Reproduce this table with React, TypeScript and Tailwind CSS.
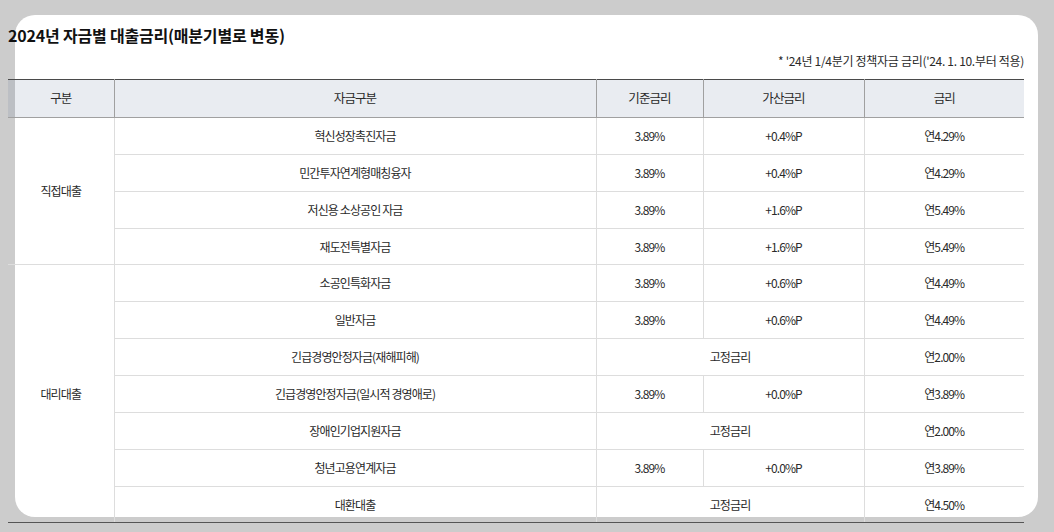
import React from 'react';

type Row = {
  name: string;
  base?: string;
  add?: string;
  rate: string;
  fixed?: boolean;
  short?: boolean;
};

const direct: Row[] = [
  { name: '혁신성장촉진자금', base: '3.89%', add: '+0.4%P', rate: '연4.29%' },
  { name: '민간투자연계형매칭융자', base: '3.89%', add: '+0.4%P', rate: '연4.29%' },
  { name: '저신용 소상공인 자금', base: '3.89%', add: '+1.6%P', rate: '연5.49%' },
  { name: '재도전특별자금', base: '3.89%', add: '+1.6%P', rate: '연5.49%', short: true },
];

const agency: Row[] = [
  { name: '소공인특화자금', base: '3.89%', add: '+0.6%P', rate: '연4.49%' },
  { name: '일반자금', base: '3.89%', add: '+0.6%P', rate: '연4.49%' },
  { name: '긴급경영안정자금(재해피해)', fixed: true, rate: '연2.00%' },
  { name: '긴급경영안정자금(일시적 경영애로)', base: '3.89%', add: '+0.0%P', rate: '연3.89%' },
  { name: '장애인기업지원자금', fixed: true, rate: '연2.00%' },
  { name: '청년고용연계자금', base: '3.89%', add: '+0.0%P', rate: '연3.89%' },
  { name: '대환대출', fixed: true, rate: '연4.50%', short: true },
];

function Rows({ label, rows, last }: { label: string; rows: Row[]; last?: boolean }) {
  return (
    <>
      {rows.map((r, i) => {
        const end = last && i === rows.length - 1;
        const td =
          (r.short ? 'h-[36px] ' : 'h-[37px] ') +
          'border-b border-l border-[#dddddd] text-center align-middle' +
          (end ? ' border-b-[#555555]' : '');
        return (
          <tr key={r.name}>
            {i === 0 && (
              <td
                rowSpan={rows.length}
                className={
                  'border-b text-center align-middle ' +
                  (last ? 'border-b-[#555555]' : 'border-b-[#dddddd]')
                }
              >
                {label}
              </td>
            )}
            <td className={td}>{r.name}</td>
            {r.fixed ? (
              <td colSpan={2} className={td}>고정금리</td>
            ) : (
              <>
                <td className={td}>{r.base}</td>
                <td className={td}>{r.add}</td>
              </>
            )}
            <td className={td}>{r.rate}</td>
          </tr>
        );
      })}
    </>
  );
}

export default function App() {
  return (
    <div className="w-[1054px] h-[532px] bg-[#cccccc] p-[15px] overflow-hidden font-['Noto_Sans_CJK_KR','Noto_Sans',sans-serif] text-[#2a2a2a]">
      <div className="w-[1023px] h-[502px] bg-white rounded-[20px]">
        <div className="-ml-[7px] w-[1016px] pt-[8px]">
          <h1 className="text-[16px] leading-[24px] font-bold text-[#111111] tracking-[-0.2px]">
            2024년 자금별 대출금리(매분기별로 변동)
          </h1>
          <p className="mt-[5px] text-right text-[12px] leading-[18px] tracking-[-0.3px]">
            * &#39;24년 1/4분기 정책자금 금리(&#39;24. 1. 10.부터 적용)
          </p>
          <table className="mt-[9px] w-full table-fixed border-collapse border-t border-t-[#4a4a4a] text-[12px] tracking-[-0.9px]">
            <colgroup>
              <col className="w-[106px]" />
              <col className="w-[482px]" />
              <col className="w-[107px]" />
              <col className="w-[161px]" />
              <col className="w-[160px]" />
            </colgroup>
            <thead>
              <tr className="bg-[rgba(72,97,138,0.12)]">
                <th className="h-[38px] border-b border-[#a0a0a0] font-normal text-[12.5px]">구분</th>
                <th className="border-b border-l border-[#a0a0a0] font-normal text-[12.5px]">자금구분</th>
                <th className="border-b border-l border-[#a0a0a0] font-normal text-[12.5px]">기준금리</th>
                <th className="border-b border-l border-[#a0a0a0] font-normal text-[12.5px]">가산금리</th>
                <th className="border-b border-l border-[#a0a0a0] font-normal text-[12.5px]">금리</th>
              </tr>
            </thead>
            <tbody>
              <Rows label="직접대출" rows={direct} />
              <Rows label="대리대출" rows={agency} last />
            </tbody>
          </table>
        </div>
      </div>
    </div>
  );
}
